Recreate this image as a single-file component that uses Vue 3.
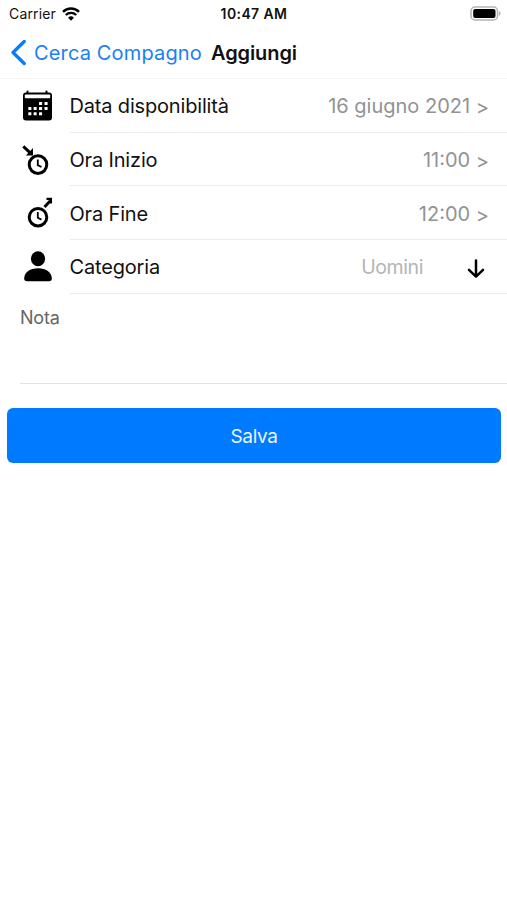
<template>
  <div class="screen">
    <!-- Status bar -->
    <div class="status-bar">
      <div class="carrier">
        <span>Carrier</span>
        <svg class="wifi" width="18" height="14" viewBox="0 0 18 14">
          <path d="M1 4.8 A11.6 11.6 0 0 1 17 4.8" fill="none" stroke="#000" stroke-width="2.5" />
          <path d="M3.8 8 A7.4 7.4 0 0 1 14.2 8" fill="none" stroke="#000" stroke-width="2.3" />
          <path d="M9 13.7 L6.1 10.7 A4.2 4.2 0 0 1 11.9 10.7 Z" />
        </svg>
      </div>
      <span class="clock">10:47 AM</span>
      <svg class="battery" width="31" height="15" viewBox="0 0 31 15">
        <rect x="1" y="1" width="26.5" height="13" rx="4" fill="#fff" stroke="#b4b4b4" stroke-width="1.5" />
        <rect x="3.2" y="3.1" width="22.3" height="8.8" rx="2" />
        <path d="M28.8 5 Q30.6 5.7 30.6 7.5 Q30.6 9.3 28.8 10 Z" fill="#b4b4b4" />
      </svg>
    </div>

    <!-- Navigation -->
    <header class="nav-bar">
      <button class="back-btn">
        <svg width="17" height="26" viewBox="0 0 17 26">
          <path d="M14.2 1.5 L3 12.5 L14.2 23.5" fill="none" stroke="#087cff" stroke-width="3.3" stroke-linecap="round" stroke-linejoin="round" />
        </svg>
        <span>Cerca Compagno</span>
      </button>
      <h1 class="nav-title">Aggiungi</h1>
    </header>

    <!-- Form rows -->
    <div class="rows">
      <div v-for="row in rows" :key="row.id" class="row">
        <svg class="row-icon" width="32" height="36" viewBox="0 0 32 36">
          <g v-if="row.id === 'date'">
            <path d="M6.5 2.5 V6 M25.5 2.5 V6" stroke="#000" stroke-width="2" stroke-linecap="round" />
            <rect x="2" y="3.5" width="29" height="28" rx="3" />
            <rect x="3.8" y="5.4" width="25.4" height="3.8" rx="1" fill="#fff" />
            <rect
              v-for="(dot, i) in calendarDots"
              :key="i"
              :x="dot[0]"
              :y="dot[1]"
              width="3.1"
              height="3.1"
              rx="0.6"
              fill="#fff"
            />
          </g>
          <g v-else-if="row.id === 'start'" fill="none" stroke="#000">
            <path d="M2.3 3.4 L10.3 10.8" stroke-width="3" />
            <path d="M12 4.9 V12.4 H4.9 Z" fill="#000" stroke="none" />
            <circle cx="17" cy="21.6" r="8.8" stroke-width="3" />
            <path d="M16.8 16.5 V22.1 L20.5 24" stroke-width="1.8" />
          </g>
          <g v-else-if="row.id === 'end'" fill="none" stroke="#000">
            <path d="M23.5 11 L29.3 4.8" stroke-width="2.9" />
            <path d="M25.5 2.9 H30 V7.5" stroke-width="2.1" />
            <circle cx="17" cy="21.2" r="8.8" stroke-width="3" />
            <path d="M16.8 16.1 V21.7 L20.5 23.6" stroke-width="1.8" />
          </g>
          <g v-else>
            <ellipse cx="17" cy="8.8" rx="7.1" ry="7.5" />
            <path d="M3.2 28.5 C3.2 22.3 9.2 18.3 17 18.3 S30.8 22.3 30.8 28.5 Q30.8 31.3 28 31.3 H6 Q3.2 31.3 3.2 28.5 Z" />
          </g>
        </svg>
        <div class="row-body">
          <span class="label">{{ row.label }}</span>
          <template v-if="row.id === 'category'">
            <span class="category">{{ row.value }}</span>
            <svg class="arrow-down" width="18" height="20" viewBox="0 0 18 20">
              <path d="M9 1.5 V17.5 M2 10.8 L9 17.6 L16 10.8" fill="none" stroke="#000" stroke-width="2.5" stroke-linecap="round" stroke-linejoin="round" />
            </svg>
          </template>
          <span v-else class="value">
            {{ row.value }}
            <span class="chevron">&gt;</span>
          </span>
        </div>
      </div>
    </div>

    <!-- Note -->
    <div class="note">Nota</div>

    <button class="save-btn">Salva</button>
  </div>
</template>

<script setup>
import { ref } from 'vue';

const rows = ref([
  { id: 'date', label: 'Data disponibilità', value: '16 giugno 2021' },
  { id: 'start', label: 'Ora Inizio', value: '11:00' },
  { id: 'end', label: 'Ora Fine', value: '12:00' },
  { id: 'category', label: 'Categoria', value: 'Uomini' }
]);

// Top-left corner of each day on the calendar icon
const calendarDots = [
  [18, 13], [23.5, 13],
  [7.3, 18], [12.6, 18], [18, 18], [23.5, 18],
  [7.3, 23.2], [12.6, 23.2], [18, 23.2]
];
</script>

<style>
body {
  margin: 0;
  background: #fff;
}
</style>

<style scoped>
.screen {
  width: 507px;
  height: 900px;
  box-sizing: border-box;
  background: #fff;
  color: #111;
  font-family: Inter, "Liberation Sans", sans-serif;
  overflow: hidden;
}

.status-bar {
  display: grid;
  grid-template-columns: 1fr auto 1fr;
  align-items: center;
  height: 27px;
  padding: 0 6px 0 9px;
  font-size: 14px;
  line-height: 27px;
}

.carrier {
  display: flex;
  align-items: center;
  gap: 6px;
  letter-spacing: 0.15px;
}

.clock {
  padding: 1px 2px 0 0;
  font-weight: 600;
  font-size: 14px;
  letter-spacing: 0.4px;
  line-height: 26px;
}

.battery {
  justify-self: end;
}

.nav-bar {
  display: flex;
  align-items: center;
  height: 52px;
  box-sizing: border-box;
  padding-left: 10px;
  border-bottom: 1px solid #f5f5f5;
}

.back-btn {
  display: flex;
  align-items: center;
  gap: 7px;
  width: 201px;
  padding: 0;
  border: none;
  background: none;
  color: #1a80f5;
  font-family: inherit;
  font-size: 20px;
  letter-spacing: 0.15px;
  white-space: nowrap;
}

.back-btn svg {
  flex: none;
}

.nav-title {
  margin: 0;
  font-size: 20px;
  font-weight: 600;
  letter-spacing: -0.1px;
}

.row {
  display: flex;
  height: 53.7px;
  padding-left: 20.5px;
}

.row-icon {
  flex: none;
  margin-top: 10px;
}

.row-body {
  flex: 1;
  display: flex;
  align-items: center;
  margin-left: 17px;
  padding: 2px 18px 0 0;
  border-bottom: 1px solid #ebebeb;
  font-size: 20px;
}

.label {
  flex: 1;
  letter-spacing: -0.17px;
}

.value {
  color: #929296;
}

.chevron {
  display: inline-block;
  vertical-align: -1px;
  line-height: 20px;
}

.category {
  margin-right: 44px;
  color: #b4b4b6;
  font-size: 19.5px;
  letter-spacing: -0.4px;
}

.arrow-down {
  margin: 4px 4px 0 0;
}

.note {
  height: 90px;
  box-sizing: border-box;
  margin-left: 20px;
  padding-top: 12px;
  border-bottom: 1px solid #e2e2e2;
  color: #666;
  font-size: 18px;
  letter-spacing: -0.2px;
  line-height: 24px;
}

.save-btn {
  display: block;
  width: 494px;
  height: 55px;
  margin: 24px 0 0 7px;
  padding: 2px 0 0;
  border: none;
  border-radius: 6px;
  background: #007aff;
  color: #eaf5ff;
  font-family: inherit;
  font-size: 19px;
  letter-spacing: -0.35px;
}
</style>
